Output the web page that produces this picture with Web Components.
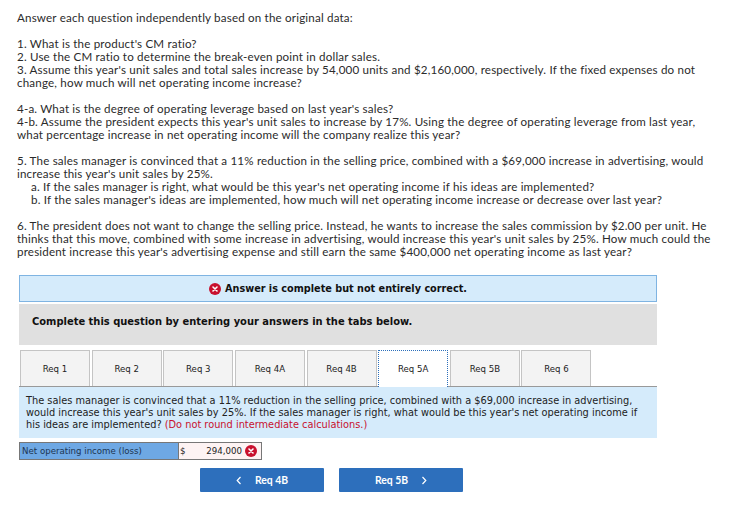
<!DOCTYPE html>
<html><head><meta charset="utf-8"><title>Req 5A</title>
<style>
html,body{margin:0;padding:0;background:#fff}
body{width:750px;height:512px;overflow:hidden}
.i{padding-left:14px}
</style></head><body>
<x-sheet>
<x-problem>
<p>Answer each question independently based on the original data:</p>
<p>1. What is the product's CM ratio?<br>2. Use the CM ratio to determine the break-even point in dollar sales.<br>3. Assume this year's unit sales and total sales increase by 54,000 units and $2,160,000, respectively. If the fixed expenses do not change, how much will net operating income increase?</p>
<p>4-a. What is the degree of operating leverage based on last year's sales?<br>4-b. Assume the president expects this year's unit sales to increase by 17%. Using the degree of operating leverage from last year, what percentage increase in net operating income will the company realize this year?</p>
<p>5. The sales manager is convinced that a 11% reduction in the selling price, combined with a $69,000 increase in advertising, would increase this year's unit sales by 25%.<br><span class="i">a. If the sales manager is right, what would be this year's net operating income if his ideas are implemented?</span><br><span class="i">b. If the sales manager's ideas are implemented, how much will net operating income increase or decrease over last year?</span></p>
<p>6. The president does not want to change the selling price. Instead, he wants to increase the sales commission by $2.00 per unit. He thinks that this move, combined with some increase in advertising, would increase this year's unit sales by 25%. How much could the president increase this year's advertising expense and still earn the same $400,000 net operating income as last year?</p>
</x-problem>
<x-banner>Answer is complete but not entirely correct.</x-banner>
<x-instruction>Complete this question by entering your answers in the tabs below.</x-instruction>
<x-tabs>
<x-tab>Req 1</x-tab><x-tab>Req 2</x-tab><x-tab>Req 3</x-tab><x-tab>Req 4A</x-tab><x-tab>Req 4B</x-tab><x-tab active>Req 5A</x-tab><x-tab>Req 5B</x-tab><x-tab>Req 6</x-tab>
</x-tabs>
<x-panel>The sales manager is convinced that a 11% reduction in the selling price, combined with a $69,000 increase in advertising, would increase this year's unit sales by 25%. If the sales manager is right, what would be this year's net operating income if his ideas are implemented? <span style="color:#c8102e">(Do not round intermediate calculations.)</span></x-panel>
<x-answer label="Net operating income (loss)" value="294,000"></x-answer>
<x-nav>
<x-nav-button dir="prev">Req 4B</x-nav-button>
<x-nav-button dir="next">Req 5B</x-nav-button>
</x-nav>
</x-sheet>
<script>
const X='<svg width="W" height="W" viewBox="0 0 12 12" style="display:block;flex:none"><circle cx="6" cy="6" r="6" fill="#c8102e"/><path d="M4 4l4 4M8 4l-4 4" stroke="#fff" stroke-width="1.6" stroke-linecap="round"/></svg>';
function def(name,css,html){
  customElements.define(name,class extends HTMLElement{
    constructor(){super();this.attachShadow({mode:'open'}).innerHTML='<style>'+css+'</style>'+(typeof html==='function'?html(this):html);}
  });
}
def('x-sheet',':host{display:block;padding:11px 0 0 0;width:750px;box-sizing:border-box}','<slot></slot>');
def('x-problem',`:host{display:block;margin:0 34px 0 17px;font:11.6px/13px "Lato","Liberation Sans",sans-serif;color:#2b2b2b;letter-spacing:.18px}
::slotted(p){margin:0 0 13px 0}`,'<slot></slot>');
const v='"DejaVu Sans","Liberation Sans",sans-serif';
def('x-banner',`:host{display:flex;align-items:center;justify-content:center;gap:4px;box-sizing:border-box;width:638px;height:27px;margin:17px 0 0 19px;background:#d5ebfb;border:1px solid #7fb4e2;font:bold 9.7px ${v};color:#111}`,
 X.replace(/W/g,'12')+'<span><slot></slot></span>');
def('x-instruction',`:host{display:block;box-sizing:border-box;width:638px;height:41px;margin:2px 0 0 19px;background:#e0e0e0;padding:11px 13px;font:bold 9.93px/13px ${v};color:#111}`,'<slot></slot>');
def('x-tabs',`:host{display:flex;box-sizing:border-box;width:638px;height:37px;margin:5px 0 0 19px;padding-left:1px;gap:1.65px;border-bottom:1px solid #999}`,'<slot></slot>');
def('x-tab',`:host{display:flex;align-items:center;justify-content:center;box-sizing:border-box;width:70px;height:36px;background:#f3f3f3;border:1px solid #c4c4c4;border-bottom:0;font:8.6px ${v};color:#222}
:host([active]){background:#fff;border:1px dotted #2c6fbb;border-bottom:0;height:37px;margin-bottom:-1px;padding-bottom:1px}`,'<slot></slot>');
def('x-panel',`:host{display:block;box-sizing:border-box;width:638px;height:51px;margin:0 0 0 19px;background:#d5ebfb;padding:8px 7px;font:9.8px/12px ${v};color:#222}`,'<slot></slot>');
def('x-answer',`:host{display:flex;box-sizing:border-box;width:243px;height:18px;margin:4px 0 0 19px;border:1px solid #777;font:8.65px/16px ${v};color:#222}
.l{width:159px;box-sizing:border-box;padding-left:2px;background:#6ea8e4;border-right:1px solid #777;white-space:nowrap;color:#1d3552}
.c{flex:1;display:flex;align-items:center;background:#fdf3f3;padding:0 4px 0 1px;gap:3px}
.s{flex:1}`,
 h=>'<div class="l">'+h.getAttribute('label')+'</div><div class="c"><span>$</span><span class="s"></span><span>'+h.getAttribute('value')+'</span>'+X.replace(/W/g,'12')+'</div>');
def('x-nav',`:host{display:flex;gap:15px;margin:8px 0 0 200px}`,'<slot></slot>');
def('x-nav-button',`:host{display:flex;align-items:center;justify-content:center;gap:13px;box-sizing:border-box;width:124px;height:24px;background:#2d6fbc;border-radius:1px;color:#fff;font:bold 10.4px "Lato","Liberation Sans",sans-serif}
svg{display:block}`,
 h=>{const p=h.getAttribute('dir')==='prev';
  const a='<svg width="6" height="9" viewBox="0 0 6 9"><path d="'+(p?'M4.5 1L1.2 4.5L4.5 8':'M1.5 1L4.8 4.5L1.5 8')+'" fill="none" stroke="#fff" stroke-width="1.2"/></svg>';
  return p?a+'<span><slot></slot></span>':'<span><slot></slot></span>'+a;});
</script>
</body></html>
